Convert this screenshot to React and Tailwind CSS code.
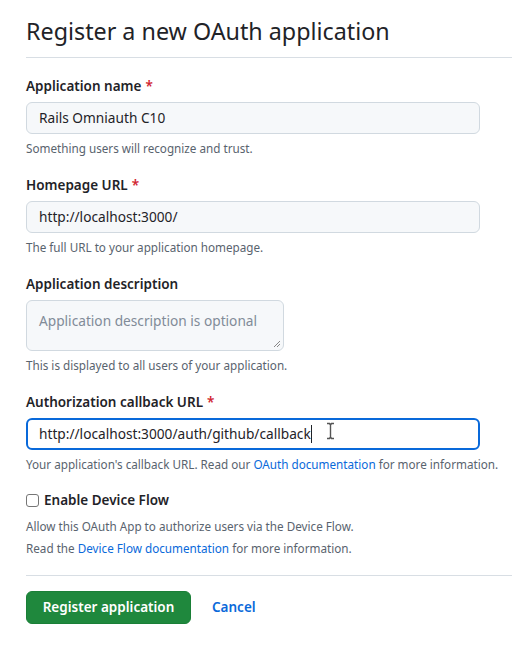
import React from "react";

const font = { fontFamily: '"Noto Sans", "Open Sans", sans-serif' };

function Field({ label, required, children, help }) {
  return (
    <div className="flex flex-col">
      <label className="text-[13.5px] leading-[20px] font-semibold text-[#1f2328]">
        {label}
        {required && <span className="text-[#d1242f] ml-[4px]">*</span>}
      </label>
      <div className="mt-[6px]">{children}</div>
      <p className="mt-[6px] text-[11.7px] leading-[16px] text-[#59636e]">{help}</p>
    </div>
  );
}

function App() {
  return (
    <div className="min-h-screen w-[512px] overflow-hidden bg-white" style={font}>
      <div className="pl-[26px]">
        <div className="pt-[13px] pb-[8px] border-b border-[#d8dee4] w-[600px]">
          <h1 className="text-[23.3px] leading-[36px] font-normal text-[#1f2328]">
            Register a new OAuth application
          </h1>
        </div>

        <div className="pt-[18px] flex flex-col gap-[19px]">
          <Field label="Application name" required help="Something users will recognize and trust.">
            <div className="w-[454px] h-[32px] rounded-[6px] border border-[#d1d9e0] bg-[#f6f8fa] px-[12px] flex items-center text-[13.7px] text-[#1f2328]">
              Rails Omniauth C10
            </div>
          </Field>

          <Field label="Homepage URL" required help="The full URL to your application homepage.">
            <div className="w-[454px] h-[32px] rounded-[6px] border border-[#d1d9e0] bg-[#f6f8fa] px-[12px] flex items-center text-[13.7px] text-[#1f2328]">
              http://localhost:3000/
            </div>
          </Field>

          <Field label="Application description" help="This is displayed to all users of your application.">
            <div className="relative w-[258px] h-[51px] rounded-[6px] border border-[#d1d9e0] bg-[#f6f8fa] px-[12px] pt-[10px] text-[13.7px] leading-[20px] text-[#818b98]">
              Application description is optional
              <svg className="absolute right-[2px] bottom-[2px]" width="8" height="8" viewBox="0 0 8 8">
                <path d="M7 1L1 7M7 4L4 7" stroke="#888" strokeWidth="1" />
              </svg>
            </div>
          </Field>

          <Field
            label="Authorization callback URL"
            required
            help={
              <>
                Your application's callback URL. Read our{" "}
                <span className="text-[#0969da]">OAuth documentation</span> for more information.
              </>
            }
          >
            <div className="relative w-[454px] h-[32px] rounded-[6px] border-2 border-[#0969da] bg-white px-[11px] flex items-center text-[13.7px] text-[#1f2328]">
              <span>http://localhost:3000/auth/github/callback</span>
              <span className="w-px h-[18px] bg-[#1f2328]" />
              <svg className="absolute left-[298px] top-[2px]" width="9" height="18" viewBox="0 0 9 18">
                <path d="M1 1.5h2.5L4.5 3l1-1.5H8M4.5 3v12M1 16.5h2.5l1-1.5 1 1.5H8" stroke="#555" strokeWidth="1.4" fill="none" />
              </svg>
            </div>
          </Field>
        </div>

        <div className="mt-[18px]">
          <div className="flex items-center">
            <span className="w-[13px] h-[13px] rounded-[3px] border border-[#767676] bg-white" />
            <span className="ml-[5px] text-[13.5px] leading-[20px] font-semibold text-[#1f2328]">
              Enable Device Flow
            </span>
          </div>
          <p className="mt-[8px] text-[11.7px] leading-[16px] text-[#59636e]">
            Allow this OAuth App to authorize users via the Device Flow.
          </p>
          <p className="mt-[6px] text-[11.7px] leading-[16px] text-[#59636e]">
            Read the <span className="text-[#0969da]">Device Flow documentation</span> for more information.
          </p>
        </div>

        <div className="mt-[19px] border-t border-[#d8dee4] w-[600px]" />

        <div className="mt-[15px] flex items-center">
          <button className="h-[33px] w-[165px] rounded-[6px] bg-[#1f883d] border border-[#1a7f37] text-white text-[13.5px] font-semibold">
            Register application
          </button>
          <span className="ml-[21px] text-[13.5px] font-semibold text-[#0969da]">Cancel</span>
        </div>
      </div>
    </div>
  );
}

export default App;
